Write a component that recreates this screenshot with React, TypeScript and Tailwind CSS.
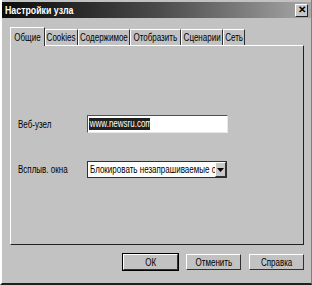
const font = { fontFamily: '"Liberation Sans", Arial, sans-serif' };

const tabs = [
  { label: 'Cookies', w: 'w-[33px]' },
  { label: 'Содержимое', w: 'w-[52px]' },
  { label: 'Отобразить', w: 'w-[51px]' },
  { label: 'Сценарии', w: 'w-[42px]' },
  { label: 'Сеть', w: 'w-[22px]' },
];

// narrow text, the dialog uses a condensed system font
const T = ({ children, className = '' }: { children: React.ReactNode; className?: string }) => (
  <span className={'inline-block whitespace-nowrap scale-x-[0.8] ' + className}>{children}</span>
);

const Btn = ({ label, def }: { label: string; def?: boolean }) => (
  <div
    className={
      'flex h-[16px] w-[55px] items-center justify-center border-t border-l border-t-white border-l-white border-r border-b border-r-[#303030] border-b-[#303030] text-[10px] text-black ' +
      (def ? 'outline outline-1 outline-black' : '')
    }
  >
    <T>{label}</T>
  </div>
);

export default function App() {
  return (
    <div
      className="relative h-[285px] w-[312px] overflow-hidden border-l-2 border-l-white border-b-2 border-b-[#202020] border-r border-r-[#808080] bg-[#c2c2c2]"
      style={font}
    >
      <div className="mt-[2px] flex h-[16px] items-center justify-between bg-gradient-to-r from-[#0c0c0c] via-[#4a4a4a] to-[#a8a8a8] pl-[3px] pr-[3px]">
        <T className="origin-left text-[11px] font-bold text-white">Настройки узла</T>
        <div className="flex h-[13px] w-[13px] items-center justify-center border-t border-l border-t-white border-l-white border-r border-b border-r-[#202020] border-b-[#202020] bg-[#c8c8c8] text-[10px] font-bold leading-none text-black">
          ✕
        </div>
      </div>

      <div className="ml-[8px] mt-[9px] w-[294px]">
        <div className="flex items-end">
          <div className="relative z-10 -mb-px flex h-[19px] w-[35px] items-center justify-center border-t border-l border-t-white border-l-white border-r border-r-[#303030] bg-[#c2c2c2] text-[10px] text-black">
            <T>Общие</T>
          </div>
          {tabs.map((t) => (
            <div
              key={t.label}
              className={
                'flex h-[16px] items-center justify-center border-t border-l border-t-white border-l-white border-r border-r-[#303030] text-[10px] text-black ' +
                t.w
              }
            >
              <T>{t.label}</T>
            </div>
          ))}
        </div>
        <div className="flex h-[200px] flex-col border-t border-l border-t-white border-l-white border-r border-b border-r-[#202020] border-b-[#202020] pl-[7px]">
          <div className="mt-[69px] flex items-center">
            <span className="w-[69px] text-[10px] text-black">
              <T className="origin-left">Веб-узел</T>
            </span>
            <div className="flex h-[18px] w-[141px] items-center border-t border-l border-t-[#505050] border-l-[#505050] border-r border-b border-r-[#e8e8e8] border-b-[#e8e8e8] bg-white pl-[1px]">
              <div className="h-[12px] w-[61px] bg-[#202020] text-[10px] leading-[12px] text-white">
                <T className="origin-left pl-[1px]">www.newsru.com</T>
              </div>
            </div>
          </div>
          <div className="mt-[28px] flex items-center">
            <span className="w-[69px] text-[10px] text-black">
              <T className="origin-left">Всплыв. окна</T>
            </span>
            <div className="flex h-[17px] w-[140px] items-center border border-[#303030] bg-white">
              <div className="h-[12px] flex-1 overflow-hidden pl-[2px] text-[10px] leading-[12px] text-black">
                <T className="origin-left">Блокировать незапрашиваемые ок</T>
              </div>
              <div className="flex h-[15px] w-[11px] shrink-0 items-center justify-center border-t border-l border-t-white border-l-white border-r border-b border-r-[#303030] border-b-[#303030] bg-[#c8c8c8]">
                <svg width="7" height="4" viewBox="0 0 7 4">
                  <path d="M0 0h7L3.5 4z" fill="#000" />
                </svg>
              </div>
            </div>
          </div>
        </div>
        <div className="mt-[9px] flex justify-end gap-[8px]">
          <Btn label="ОК" def />
          <Btn label="Отменить" />
          <Btn label="Справка" />
        </div>
      </div>
    </div>
  );
}
